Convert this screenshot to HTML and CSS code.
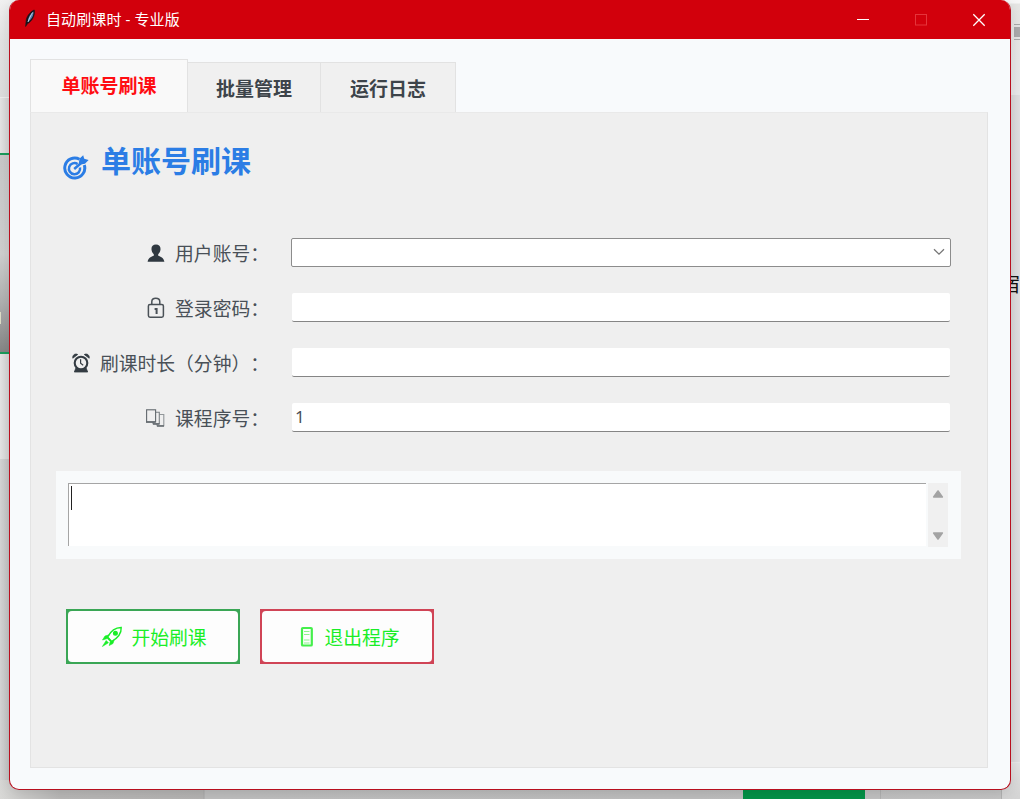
FILE: index.html
```
<!DOCTYPE html>
<html lang="zh-CN">
<head>
    <meta charset="UTF-8">
    <meta name="viewport" content="width=device-width, initial-scale=1.0">
    <title>自动刷课时 - 专业版</title>
    <link rel="stylesheet" href="styles.css">
</head>
<body>
    <div class="desktop">
        <!-- 窗口后面的内容 -->
        <div class="behind top-left"></div>
        <div class="behind photo"></div>
        <div class="behind left-mark"></div>
        <div class="behind left-bottom"></div>
        <div class="behind bottom-bar"></div>
        <div class="behind bottom-green"></div>
        <div class="behind bottom-box"></div>
        <div class="behind right-top"></div>
        <div class="behind right-mark"></div>
        <div class="behind right-text">宿</div>
        <div class="behind right-bottom"></div>

        <div class="window">
            <div class="titlebar">
                <svg class="feather" width="12" height="20" viewBox="0 0 12 20">
                    <path d="M10.3 1C7.2 2 3 6.5 2.2 11L1.6 17.5L3.6 14.6C7.5 12.8 11.4 6.5 10.3 1Z" fill="#17161c" stroke="#17161c" stroke-width="0.6"/>
                    <path d="M9.4 2.4C6.2 5 4 8.6 3.8 12.8C7.2 10.8 10 6.5 9.4 2.4Z" fill="#5a7fae"/>
                    <path d="M8.6 3.5C7 6 5 10 4 13" fill="none" stroke="#c5dcef" stroke-width="0.9"/>
                </svg>
                <span class="caption">自动刷课时 - 专业版</span>
                <div class="controls">
                    <svg width="58" height="38" viewBox="0 0 58 38"><path d="M23 19.5H35" stroke="#fff"/></svg>
                    <svg width="58" height="38" viewBox="0 0 58 38"><rect x="23.5" y="14.5" width="11" height="10.5" fill="none" stroke="#e5343b"/></svg>
                    <svg width="58" height="38" viewBox="0 0 58 38"><path d="M23.3 14.3L34.7 25.7M34.7 14.3L23.3 25.7" stroke="#fff" stroke-width="1.3"/></svg>
                </div>
            </div>

            <div class="content">
                <div class="tabs">
                    <div class="tab active">单账号刷课</div>
                    <div class="tab">批量管理</div>
                    <div class="tab last">运行日志</div>
                </div>

                <div class="panel">
                    <h1>
                        <svg width="26" height="26" viewBox="0 0 26 26" fill="none" stroke="#2b7de5">
                            <path d="M16.5 5.2A10 10 0 1 0 21.3 11" stroke-width="3"/>
                            <path d="M14.6 10A5.6 5.6 0 1 0 17 13.6" stroke-width="2.5"/>
                            <path d="M11.2 15L19 8.2" stroke-width="2.5"/>
                            <path d="M15.8 9L16.6 4.4L20.2 1.2L21.2 4.8L25.6 6L22 9.8L17.5 10.4Z" fill="#2b7de5" stroke="none"/>
                        </svg>
                        <span>单账号刷课</span>
                    </h1>

                    <div class="form">
                        <div class="row">
                            <label>
                                <svg width="18" height="20" viewBox="0 0 18 20"><path d="M9 1.5C5.8 1.5 4.2 3.5 4.5 6.6C4.7 8.8 5.6 10.3 6.8 11.2V12.7C4.5 13.5 1.2 14.6 .6 18.8H17.4C16.8 14.6 13.5 13.5 11.2 12.7V11.2C12.4 10.3 13.3 8.8 13.5 6.6C13.8 3.5 12.2 1.5 9 1.5Z" fill="#2f3840"/></svg>
                                <span>用户账号：</span>
                            </label>
                            <div class="combo">
                                <svg width="12" height="8" viewBox="0 0 12 8"><path d="M1 1.3L6 6.2L11 1.3" fill="none" stroke="#777" stroke-width="1.3"/></svg>
                            </div>
                        </div>
                        <div class="row">
                            <label>
                                <svg width="18" height="22" viewBox="0 0 18 22" fill="none" stroke="#4a5157" stroke-width="1.5">
                                    <rect x="1.4" y="7.4" width="15" height="12.8" rx="1.6"/>
                                    <path d="M4.8 7.4V4.8C4.8 .2 12.8 .2 12.8 4.8V7.4"/>
                                    <path d="M7.6 12.1H9.6V17" stroke-width="2"/>
                                </svg>
                                <span>登录密码：</span>
                            </label>
                            <div class="entry"></div>
                        </div>
                        <div class="row">
                            <label>
                                <svg width="18" height="20" viewBox="0 0 18 20">
                                    <circle cx="9" cy="10" r="6.3" fill="none" stroke="#343c43" stroke-width="2.1"/>
                                    <path d="M.8 5.2C.3 2 3 .2 5.7 1.5ZM17.2 5.2C17.7 2 15 .2 12.3 1.5ZM2.3 19L4 14.8L7 16.6H11L14 14.8L15.7 19Z" fill="#343c43" stroke="#343c43" stroke-width=".8"/>
                                    <path d="M8.6 6.3V10.3L11.2 12.2" fill="none" stroke="#343c43" stroke-width="1.2"/>
                                </svg>
                                <span>刷课时长（分钟）：</span>
                            </label>
                            <div class="entry"></div>
                        </div>
                        <div class="row">
                            <label>
                                <svg width="20" height="20" viewBox="0 0 20 20" fill="#efefef" stroke="#62686d" stroke-width="1.1">
                                    <path d="M13.5 6.5H18.8V17.8H12V15.5" stroke="#92979a"/>
                                    <path d="M9 4.2H14.3V15.8H8V13.5" stroke="#7b8084"/>
                                    <rect x="1.6" y="1.8" width="9" height="12.2"/>
                                    <path d="M1 14H10.5M8 16H14.5M12 18H19" stroke-width="1.5"/>
                                </svg>
                                <span>课程序号：</span>
                            </label>
                            <div class="entry">1</div>
                        </div>
                    </div>

                    <div class="output">
                        <div class="textbox"><span class="caret"></span></div>
                        <div class="scrollbar">
                            <svg width="12" height="10" viewBox="0 0 12 10"><path d="M6 2L10.3 8H1.7Z" fill="#a3a3a3" stroke="#a3a3a3" stroke-width="1.6" stroke-linejoin="round"/></svg>
                            <svg width="12" height="10" viewBox="0 0 12 10"><path d="M6 8L10.3 2H1.7Z" fill="#a3a3a3" stroke="#a3a3a3" stroke-width="1.6" stroke-linejoin="round"/></svg>
                        </div>
                    </div>

                    <div class="buttons">
                        <div class="btn start">
                            <div class="face">
                                <svg width="22" height="22" viewBox="0 0 22 22" fill="none" stroke="#19ee27" stroke-width="1.4">
                                    <path d="M6.5 11C9.5 5.5 14.5 1.6 20.2 1.5C20.5 7 16.3 12.3 10.7 15.5Z"/>
                                    <circle cx="14.4" cy="7.3" r="1.8" fill="#19ee27"/>
                                    <path d="M8.4 8.8L4 10L1.5 14L6.3 12.5L9.3 15.5L8.2 19.5L12 17.5L13.2 13.7L10.6 15.4L6.6 11.2Z" fill="#19ee27" stroke-width=".6"/>
                                    <path d="M5.2 14.5L1.4 20.5L7.4 16.8Z" fill="#19ee27" stroke-width=".6"/>
                                </svg>
                                <span>开始刷课</span>
                            </div>
                        </div>
                        <div class="btn exit">
                            <div class="face">
                                <svg width="14" height="22" viewBox="0 0 14 22" fill="none" stroke="#45ef4c">
                                    <rect x="2" y="2" width="9.8" height="17.5" rx="0.8" stroke-width="2.2"/>
                                    <path d="M4 5.5H9.5M4 8.5H9.5M4 14H9.5M4 17H9.5" stroke-width="1.2" stroke="#8df48e"/>
                                </svg>
                                <span>退出程序</span>
                            </div>
                        </div>
                    </div>
                </div>
            </div>
        </div>
    </div>
</body>
</html>
```
FILE: styles.css
```
* {
    box-sizing: border-box;
}
body {
    margin: 0;
    font-family: "Noto Sans CJK SC", "Noto Sans", sans-serif;
    color: #495057;
    text-spacing-trim: space-all;
}
svg {
    display: block;
    flex: none;
}
.desktop {
    position: relative;
    width: 1020px;
    height: 799px;
    overflow: hidden;
    background: linear-gradient(to right, #e5e5e5 0, #d5d5d5 9px, #d9d9d9 1010px, #e0dfe1 1020px);
}

/* 背景 */
.behind {
    position: absolute;
}
.top-left {
    left: 0;
    top: 0;
    width: 30px;
    height: 98px;
    background: linear-gradient(#f1f1f1, #e4e4e4 40px, #dedede);
    border-bottom: 1px solid #eee;
}
.photo {
    left: 0;
    top: 153px;
    width: 20px;
    height: 201px;
    background: linear-gradient(#c9c9c9, #d0d0d0 50%, #b0b0b0 75%, #868686);
    border: solid #199c5b;
    border-width: 2px 0;
}
.left-mark {
    left: 0;
    top: 312px;
    width: 1px;
    height: 12px;
    background: #dfdfc8;
}
.left-bottom {
    left: 0;
    top: 459px;
    width: 20px;
    height: 340px;
    background: linear-gradient(to right, #d5d5d5, #c4c4c4 9px);
}
.bottom-bar {
    left: 0;
    top: 780px;
    width: 1002px;
    height: 19px;
    background: linear-gradient(to right, #d8d8d6 0, #b9b8b7 60px, #b5b4b3 203px, #a9a9a9 204px, #bfbfbf 205px, #bebebe 700px, #c5c5c5);
}
.bottom-green {
    left: 743px;
    top: 780px;
    width: 122px;
    height: 19px;
    background: #039247;
}
.bottom-box {
    left: 880px;
    top: 780px;
    width: 122px;
    height: 19px;
    border: solid #b2b2b2;
    border-width: 0 1px;
}
.right-top {
    left: 1000px;
    top: 0;
    width: 20px;
    height: 95px;
    background: linear-gradient(#f7f7f7 3px, #e6e6e4 4px, #e9e9ea);
}
.right-mark {
    left: 1014px;
    top: 24px;
    width: 6px;
    height: 16px;
    background: #aaaaac;
    border: solid #aaa;
    border-width: 1px 0;
    box-shadow: inset 0 2px #e5e5e5, inset 0 -2px #e5e5e5;
}
.right-text {
    left: 1000px;
    top: 270px;
    font-size: 20px;
    line-height: 28px;
    color: #111;
}
.right-bottom {
    left: 1002px;
    top: 762px;
    width: 18px;
    height: 37px;
    background: linear-gradient(#e3e3e3, #d4d4d4);
    border-top: 1px solid #e8e8e8;
}

/* 主窗口 */
.window {
    position: absolute;
    left: 9px;
    top: 0;
    width: 1002px;
    height: 790px;
    border: 1px solid #b80f1e;
    border-top: none;
    border-radius: 10px;
    background: #f8fafc;
    overflow: hidden;
    box-shadow: 0 3px 14px rgba(0, 0, 0, 0.13);
}
.titlebar {
    display: flex;
    align-items: center;
    height: 39px;
    padding: 0 0 1px 14px;
    background: #d2000c;
    color: #fff;
}
.caption {
    margin-left: 10px;
    font-family: "Noto Sans", "Noto Sans CJK SC", sans-serif;
    font-size: 15px;
    line-height: 20px;
    letter-spacing: 0.1px;
}
.controls {
    display: flex;
    margin-left: auto;
    margin-right: 2px;
}
.content {
    padding: 20px;
}

/* 标签页 */
.tabs {
    display: flex;
    align-items: flex-end;
    height: 53px;
}
.tab {
    width: 133px;
    height: 50px;
    border: solid #e2e2e2;
    border-width: 1px 1px 0 0;
    background: #f0f0f0;
    font-size: 19px;
    font-weight: bold;
    line-height: 49px;
    text-align: center;
    color: #3d444a;
}
.tab.last {
    width: 135px;
}
.tab.active {
    width: 158px;
    height: 53px;
    border-left-width: 1px;
    background: #f9f9f9;
    line-height: 50px;
    color: #ff0d12;
}
.panel {
    height: 656px;
    width: 958px;
    padding: 28px 25px 0;
    border: 1px solid #e3e3e3;
    border-top-color: #e9e9e9;
    background: #efefef;
}

h1 {
    display: flex;
    align-items: center;
    height: 44px;
    margin: 0;
    padding-left: 7px;
    font-size: 30px;
    line-height: 36px;
    color: #2b7de5;
}
h1 svg {
    margin-top: 8px;
}
h1 span {
    height: 44px;
    margin-left: 12px;
}

/* 表单 */
.form {
    display: flex;
    flex-direction: column;
    gap: 25px;
    margin-top: 52px;
}
.row {
    display: flex;
    align-items: center;
    height: 30px;
}
.row label {
    display: flex;
    align-items: center;
    justify-content: flex-end;
    gap: 10px;
    width: 213px;
    padding-top: 1px;
    margin-right: 22px;
    font-size: 18.8px;
    line-height: 30px;
    white-space: nowrap;
}
.row label svg {
    margin-top: 1px;
}
.combo,
.entry {
    width: 660px;
    background: #fff;
}
.combo {
    display: flex;
    align-items: center;
    justify-content: flex-end;
    height: 29px;
    padding-right: 5px;
    border: 1px solid #8c8c8c;
    border-radius: 2px;
}
.entry {
    width: 658px;
    height: 29px;
    margin-left: 1px;
    padding-left: 3px;
    border-bottom: 1px solid #858585;
    border-radius: 2px;
    font-family: "Noto Sans", sans-serif;
    font-size: 17px;
    line-height: 28px;
}

.output {
    display: flex;
    width: 905px;
    height: 88px;
    margin-top: 39px;
    padding: 12px;
    background: #f8fafb;
}
.textbox {
    width: 858px;
    height: 63px;
    padding: 2px 0 0 2px;
    border: solid #a5a5a5;
    border-width: 1px 0 0 1px;
    background: #fff;
}
.caret {
    display: block;
    width: 1px;
    height: 24px;
    background: #222;
}
.scrollbar {
    display: flex;
    flex-direction: column;
    align-items: center;
    justify-content: space-between;
    width: 20px;
    height: 64px;
    margin-left: 2px;
    padding: 6px 0;
    background: #f0f0f0;
}

/* 按钮：外框直角，内部圆角 */
.buttons {
    display: flex;
    gap: 20px;
    margin: 50px 0 0 10px;
}
.btn {
    width: 174px;
    height: 55px;
    padding: 2px;
}
.face {
    display: flex;
    align-items: center;
    justify-content: center;
    height: 100%;
    border-radius: 4px;
    background: #fdfdfd;
    font-size: 18.8px;
    line-height: 30px;
    color: #19ee27;
}
.start {
    background: #3aa655;
}
.start .face {
    gap: 8px;
    padding-left: 2px;
}
.exit {
    background: #d04456;
}
.exit .face {
    gap: 10px;
    padding-left: 6px;
}
```
